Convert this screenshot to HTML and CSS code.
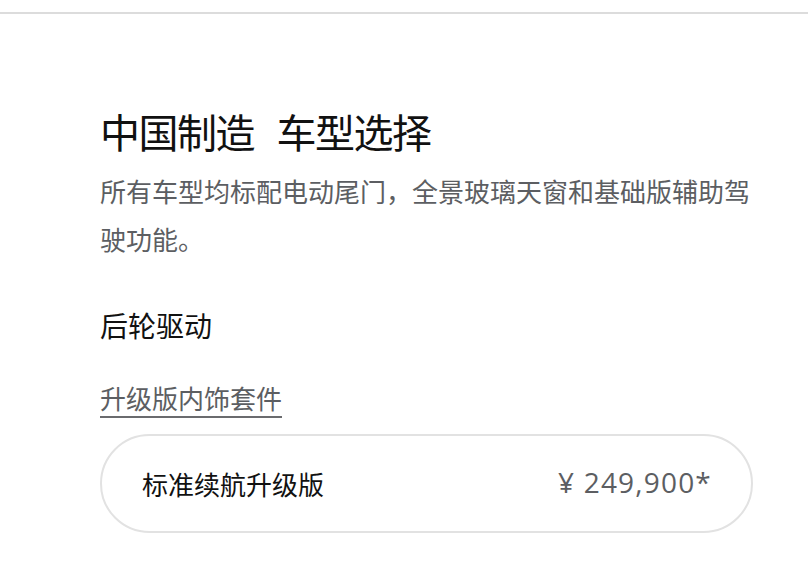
FILE: index.html
```html
<!DOCTYPE html>
<html>
<head>
	<meta charset="utf-8">
	<title>车型选择</title>
	<link rel="stylesheet" href="styles.css">
</head>
<body>
	<div class="topline"></div>
	<div class="main">
		<h1 class="title">中国制造 车型选择</h1>
		<p class="desc">所有车型均标配电动尾门，全景玻璃天窗和基础版辅助驾驶功能。</p>

		<h2 class="drive">后轮驱动</h2>
		<div class="links">
			<a class="upgrade">升级版内饰套件</a>
		</div>

		<div class="option">
			<span class="option-name">标准续航升级版</span>
			<span class="option-price">¥ 249,900*</span>
		</div>
	</div>
</body>
</html>
```

FILE: styles.css
```css
*{
	margin: 0;
	padding: 0;
	box-sizing: border-box;
}
body{
	background: #fff;
	font-family: "Noto Sans CJK SC", "Noto Sans", sans-serif;
	color: #171a20;
}
.topline{
	height: 14px;
	border-bottom: 2px solid #dcdcdc;
}
.main{
	padding: 93px 55px 0 100px;
}
.title{
	font-size: 40px;
	font-weight: 400;
	line-height: 48px;
	letter-spacing: -1.5px;
	word-spacing: 15px;
	color: #111;
}
.desc{
	margin-top: 12px;
	font-size: 26px;
	line-height: 48px;
	color: #5c5e62;
}
.drive{
	margin-top: 42px;
	font-size: 28px;
	font-weight: 400;
	line-height: 40px;
	color: #111;
}
.links{
	margin-top: 35px;
}
.upgrade{
	display: inline-block;
	font-size: 26px;
	line-height: 36px;
	color: #5c5e62;
	border-bottom: 2px solid #6a6b6e;
	cursor: pointer;
}
.option{
	margin-top: 16px;
	height: 99px;
	border: 2px solid #e2e2e2;
	border-radius: 50px;
	display: flex;
	align-items: center;
	justify-content: space-between;
	padding: 0 39px 0 40px;
}
.option-name{
	font-size: 26px;
	color: #111;
}
.option-price{
	font-family: "Open Sans", "Noto Sans", sans-serif;
	font-size: 28px;
	line-height: 36px;
	margin-bottom: 3px;
	letter-spacing: 1.2px;
	color: #5c5e62;
}
```
